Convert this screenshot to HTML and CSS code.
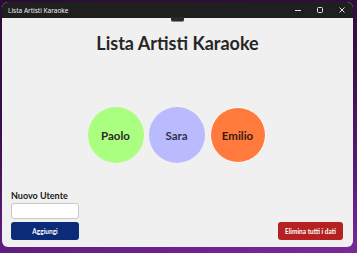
FILE: index.html
```html
<!DOCTYPE html>
<html>
<head>
<meta charset="utf-8">
<link rel="stylesheet" href="styles.css">
</head>
<body>
<div class="window">
  <div class="titlebar">
    <span class="app-title">Lista Artisti Karaoke</span>
    <div class="controls">
      <span class="ctl">
        <svg width="10" height="10" viewBox="0 0 10 10"><path d="M2 5.5H8" stroke="#e0e0e0" stroke-width="1"/></svg>
      </span>
      <span class="ctl">
        <svg width="10" height="10" viewBox="0 0 10 10"><rect x="2.5" y="2.5" width="5" height="5" rx="1" fill="none" stroke="#e0e0e0" stroke-width="1"/></svg>
      </span>
      <span class="ctl">
        <svg width="10" height="10" viewBox="0 0 10 10"><path d="M2.5 2.5L7.5 7.5M7.5 2.5L2.5 7.5" stroke="#e0e0e0" stroke-width="1"/></svg>
      </span>
    </div>
  </div>
  <div class="content">
    <div class="debugbar"></div>
    <h1 class="heading">Lista Artisti Karaoke</h1>
    <div class="circles">
      <div class="circle paolo">Paolo</div>
      <div class="circle sara">Sara</div>
      <div class="circle emilio">Emilio</div>
    </div>
    <div class="footer">
      <div class="form">
        <label class="label">Nuovo Utente</label>
        <input class="input" type="text">
        <button class="btn btn-add">Aggiungi</button>
      </div>
      <button class="btn btn-del">Elimina tutti i dati</button>
    </div>
  </div>
</div>
</body>
</html>
```
FILE: styles.css
```css
* { box-sizing: border-box; }
html, body { margin: 0; height: 100%; }
body {
  width: 357px;
  height: 253px;
  padding: 2px 4px 6px 2px;
  background: linear-gradient(170deg, #2a0c33 0%, #3a0f4a 40%, #5a1a7a 75%, #7a2a9a 100%);
  font-family: Lato, "Open Sans", sans-serif;
  overflow: hidden;
}
.window {
  width: 351px;
  height: 245px;
  display: flex;
  flex-direction: column;
  background: #f0f0f0;
  border-radius: 6px;
  overflow: hidden;
}
.titlebar {
  height: 16px;
  flex: none;
  background: #1f1f1f;
  display: flex;
  align-items: center;
  justify-content: space-between;
  padding-left: 6px;
}
.app-title {
  color: #f0f0f0;
  font-size: 6.5px;
  font-family: "Noto Sans", sans-serif;
}
.controls { display: flex; }
.ctl {
  width: 22px;
  height: 16px;
  display: flex;
  align-items: center;
  justify-content: center;
}
.content {
  flex: 1;
  position: relative;
  display: flex;
  flex-direction: column;
  padding: 0 9px 7px 9px;
}
.debugbar {
  position: absolute;
  left: 169px;
  top: -1px;
  width: 13px;
  height: 5px;
  background: #2a2a2a;
  border-bottom: 1px solid #888;
  border-radius: 0 0 2px 2px;
}
.heading {
  margin: 12px 0 0 0;
  text-align: center;
  font-size: 18px;
  line-height: 26px;
  font-weight: 700;
  color: #262626;
}
.circles {
  display: flex;
  justify-content: center;
  gap: 5px;
  margin-top: 51px;
  padding-right: 2px;
}
.circle {
  width: 56px;
  height: 56px;
  border-radius: 50%;
  display: flex;
  align-items: center;
  justify-content: center;
  font-size: 11.5px;
  font-weight: 700;
  color: #2a2a2a;
}
.paolo { background: #aaff80; }
.sara { background: #babaff; color: #30304a; }
.emilio { background: #ff7a3c; border: 1px solid #ffffff; color: #3a1a10; }
.footer {
  margin-top: auto;
  display: flex;
  justify-content: space-between;
  align-items: flex-end;
}
.form {
  display: flex;
  flex-direction: column;
  width: 68px;
}
.label {
  font-size: 9px;
  font-weight: 700;
  color: #1a1a1a;
  line-height: 10px;
  white-space: nowrap;
}
.input {
  height: 16px;
  margin: 2px 0 0 0;
  border: 1px solid #c8c8c8;
  border-radius: 3px;
  background: #ffffff;
}
.btn {
  border: none;
  border-radius: 3px;
  color: #ffffff;
  font-family: Lato, sans-serif;
  font-weight: 700;
  font-size: 6.5px;
  height: 18px;
  padding: 0;
}
.btn-add {
  margin-top: 3px;
  background: #0b2a78;
  width: 68px;
}
.btn-del {
  background: #b52020;
  width: 65px;
  margin-right: 1px;
}
```
